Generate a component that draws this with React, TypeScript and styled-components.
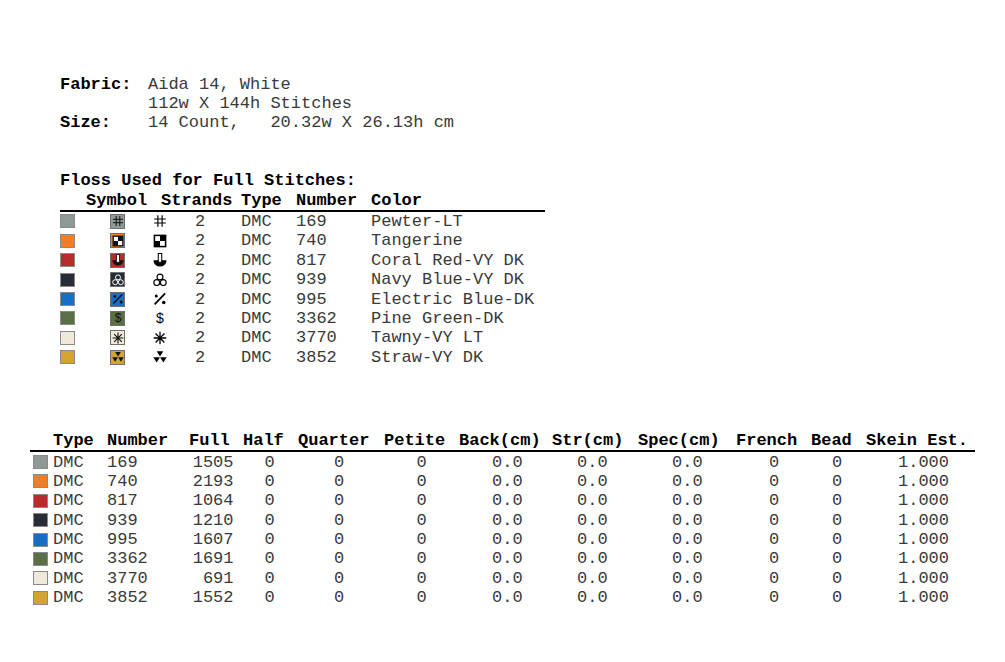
import React from 'react'
import styled, { createGlobalStyle } from 'styled-components'

const GlobalStyle = createGlobalStyle`
  html, body {
    margin: 0;
    background: #ffffff;
  }
  body {
    font-family: "Liberation Mono", "Courier New", monospace;
    font-size: 17px;
    color: #3a3a3a;
  }
`

type SymbolKind = 'hash' | 'checker' | 'anchor' | 'trefoil' | 'percent' | 'dollar' | 'star' | 'tri'

interface Floss {
  number: string
  name: string
  color: string
  symbol: SymbolKind
  ink: string
  full: number
}

const flosses: Floss[] = [
  { number: '169', name: 'Pewter-LT', color: '#8f9a97', symbol: 'hash', ink: '#111', full: 1505 },
  { number: '740', name: 'Tangerine', color: '#f47d22', symbol: 'checker', ink: '#111', full: 2193 },
  { number: '817', name: 'Coral Red-VY DK', color: '#b72b2b', symbol: 'anchor', ink: '#111', full: 1064 },
  { number: '939', name: 'Navy Blue-VY DK', color: '#262b35', symbol: 'trefoil', ink: '#fff', full: 1210 },
  { number: '995', name: 'Electric Blue-DK', color: '#176ec6', symbol: 'percent', ink: '#111', full: 1607 },
  { number: '3362', name: 'Pine Green-DK', color: '#5b6f46', symbol: 'dollar', ink: '#111', full: 1691 },
  { number: '3770', name: 'Tawny-VY LT', color: '#efe9da', symbol: 'star', ink: '#111', full: 691 },
  { number: '3852', name: 'Straw-VY DK', color: '#d3a42f', symbol: 'tri', ink: '#111', full: 1552 },
]

const Page = styled.div`
  padding: 75px 0 40px 0;
  display: flex;
  flex-direction: column;
`

const Info = styled.div`
  margin-left: 60px;
  display: grid;
  grid-template-columns: 88px auto;
  line-height: 19px;
`

const Label = styled.span`
  font-weight: bold;
  color: #000;
`

const Value = styled.span`
  white-space: pre;
`

const FlossSection = styled.section`
  margin-left: 60px;
  margin-top: 39px;
  width: 485px;
`

const Title = styled.div`
  font-weight: bold;
  color: #000;
  line-height: 19.4px;
`

const Grid = styled.div<{ $cols: string }>`
  display: grid;
  grid-template-columns: ${(p) => p.$cols};
  align-items: center;
  height: 19.4px;
  white-space: pre;
`

const HeadGrid = styled(Grid)`
  font-weight: bold;
  color: #000;
  border-bottom: 2px solid #000;
`

const Cell = styled.span<{ $align?: 'left' | 'right' | 'center'; $pad?: number }>`
  text-align: ${(p) => p.$align ?? 'left'};
  padding-right: ${(p) => p.$pad ?? 0}px;
`

const Swatch = styled.span<{ $color: string }>`
  display: block;
  width: 13px;
  height: 12px;
  background: ${(p) => p.$color};
  border: 1px solid #8a8a8a;
`

const SymbolBox = styled.span<{ $color: string }>`
  display: flex;
  align-items: center;
  justify-content: center;
  width: 13px;
  height: 13px;
  background: ${(p) => p.$color};
  border: 1px solid #6f6f6f;

  svg {
    overflow: visible;
  }
`

const Glyph = styled.span`
  display: flex;
  align-items: center;
  width: 14px;
  height: 14px;
`

const SummarySection = styled.section`
  margin-left: 30px;
  margin-top: 64px;
  width: 945px;
`

const SummaryRow = styled(Grid)`
  padding-left: 3px;
`

const StitchSymbol = ({ kind, ink, size }: { kind: SymbolKind; ink: string; size: number }) => {
  const body = (() => {
    switch (kind) {
      case 'hash':
        return (
          <path d="M4.2 1V11M7.8 1V11M1 4.3H11M1 7.7H11" stroke={ink} strokeWidth="1" fill="none" />
        )
      case 'checker':
        return (
          <g>
            <rect x="1.2" y="1.2" width="9.6" height="9.6" fill="#fff" stroke={ink} strokeWidth="1.3" />
            <rect x="6" y="1.2" width="4.8" height="4.8" fill={ink} />
            <rect x="1.2" y="6" width="4.8" height="4.8" fill={ink} />
          </g>
        )
      case 'anchor':
        return (
          <g>
            <path d="M0.4 6.2A5.6 5.4 0 0 0 11.6 6.2Z" fill={ink} />
            <path d="M4.5 0.5H7.5V7.2L6 8.9L4.5 7.2Z" fill="#fff" stroke={ink} strokeWidth="0.9" />
          </g>
        )
      case 'trefoil':
        return (
          <g fill="none" stroke={ink} strokeWidth="1">
            <circle cx="6" cy="3.4" r="2.5" />
            <circle cx="3.2" cy="8.2" r="2.5" />
            <circle cx="8.8" cy="8.2" r="2.5" />
          </g>
        )
      case 'percent':
        return (
          <g fill={ink}>
            <path d="M1.4 10.6L10.4 1.2" stroke={ink} strokeWidth="1.5" />
            <circle cx="2.8" cy="3.4" r="1.3" />
            <circle cx="9.2" cy="9" r="1.5" />
          </g>
        )
      case 'dollar':
        return (
          <text x="6" y="10.4" textAnchor="middle" fontSize="12" fontFamily="Liberation Sans, Arial, sans-serif" fill={ink}>
            $
          </text>
        )
      case 'star':
        return (
          <path
            d="M6 0.6V11.4M0.6 6H11.4M2.2 2.2L9.8 9.8M9.8 2.2L2.2 9.8"
            stroke={ink}
            strokeWidth="1.1"
            fill="none"
          />
        )
      case 'tri':
        return (
          <g fill={ink}>
            <path d="M3.2 1H8.8L6 5.6Z" />
            <path d="M0.3 6.2H5.9L3.1 10.8Z" />
            <path d="M6.1 6.2H11.7L8.9 10.8Z" />
          </g>
        )
    }
  })()
  return (
    <svg width={size} height={size} viewBox="0 0 12 12">
      {body}
    </svg>
  )
}

const flossRowCols = '50px 43px 42px 46px 55px 75px 1fr'
const flossHeadCols = '26px 75px 80px 55px 75px 1fr'
const sumHeadCols = '23px 54px 82px 54px 55px 86px 75px 93px 86px 98px 75px 55px 1fr'
const sumRowCols = '20px 54px 63px 94.5px 69.5px 82.5px 75.5px 85px 95px 97px 63px 66px 1fr'

export default function App() {
  return (
    <Page>
      <GlobalStyle />
      <Info>
        <Label>Fabric:</Label>
        <Value>Aida 14, White</Value>
        <span />
        <Value>112w X 144h Stitches</Value>
        <Label>Size:</Label>
        <Value>14 Count,   20.32w X 26.13h cm</Value>
      </Info>

      <FlossSection>
        <Title>Floss Used for Full Stitches:</Title>
        <HeadGrid $cols={flossHeadCols}>
          <span />
          <Cell>Symbol</Cell>
          <Cell>Strands</Cell>
          <Cell>Type</Cell>
          <Cell>Number</Cell>
          <Cell>Color</Cell>
        </HeadGrid>
        {flosses.map((f) => (
          <Grid key={f.number} $cols={flossRowCols}>
            <Swatch $color={f.color} />
            <SymbolBox $color={f.color}>
              <StitchSymbol kind={f.symbol} ink={f.ink} size={12} />
            </SymbolBox>
            <Glyph>
              <StitchSymbol kind={f.symbol} ink="#000" size={14} />
            </Glyph>
            <Cell>2</Cell>
            <Cell>DMC</Cell>
            <Cell>{f.number}</Cell>
            <Cell>{f.name}</Cell>
          </Grid>
        ))}
      </FlossSection>

      <SummarySection>
        <HeadGrid $cols={sumHeadCols}>
          <span />
          <Cell>Type</Cell>
          <Cell>Number</Cell>
          <Cell>Full</Cell>
          <Cell>Half</Cell>
          <Cell>Quarter</Cell>
          <Cell>Petite</Cell>
          <Cell>Back(cm)</Cell>
          <Cell>Str(cm)</Cell>
          <Cell>Spec(cm)</Cell>
          <Cell>French</Cell>
          <Cell>Bead</Cell>
          <Cell>Skein Est.</Cell>
        </HeadGrid>
        {flosses.map((f) => (
          <SummaryRow key={f.number} $cols={sumRowCols}>
            <Swatch $color={f.color} />
            <Cell>DMC</Cell>
            <Cell>{f.number}</Cell>
            <Cell $align="right" $pad={31}>{f.full}</Cell>
            <Cell>0</Cell>
            <Cell>0</Cell>
            <Cell>0</Cell>
            <Cell>0.0</Cell>
            <Cell>0.0</Cell>
            <Cell>0.0</Cell>
            <Cell>0</Cell>
            <Cell>0</Cell>
            <Cell>1.000</Cell>
          </SummaryRow>
        ))}
      </SummarySection>
    </Page>
  )
}
